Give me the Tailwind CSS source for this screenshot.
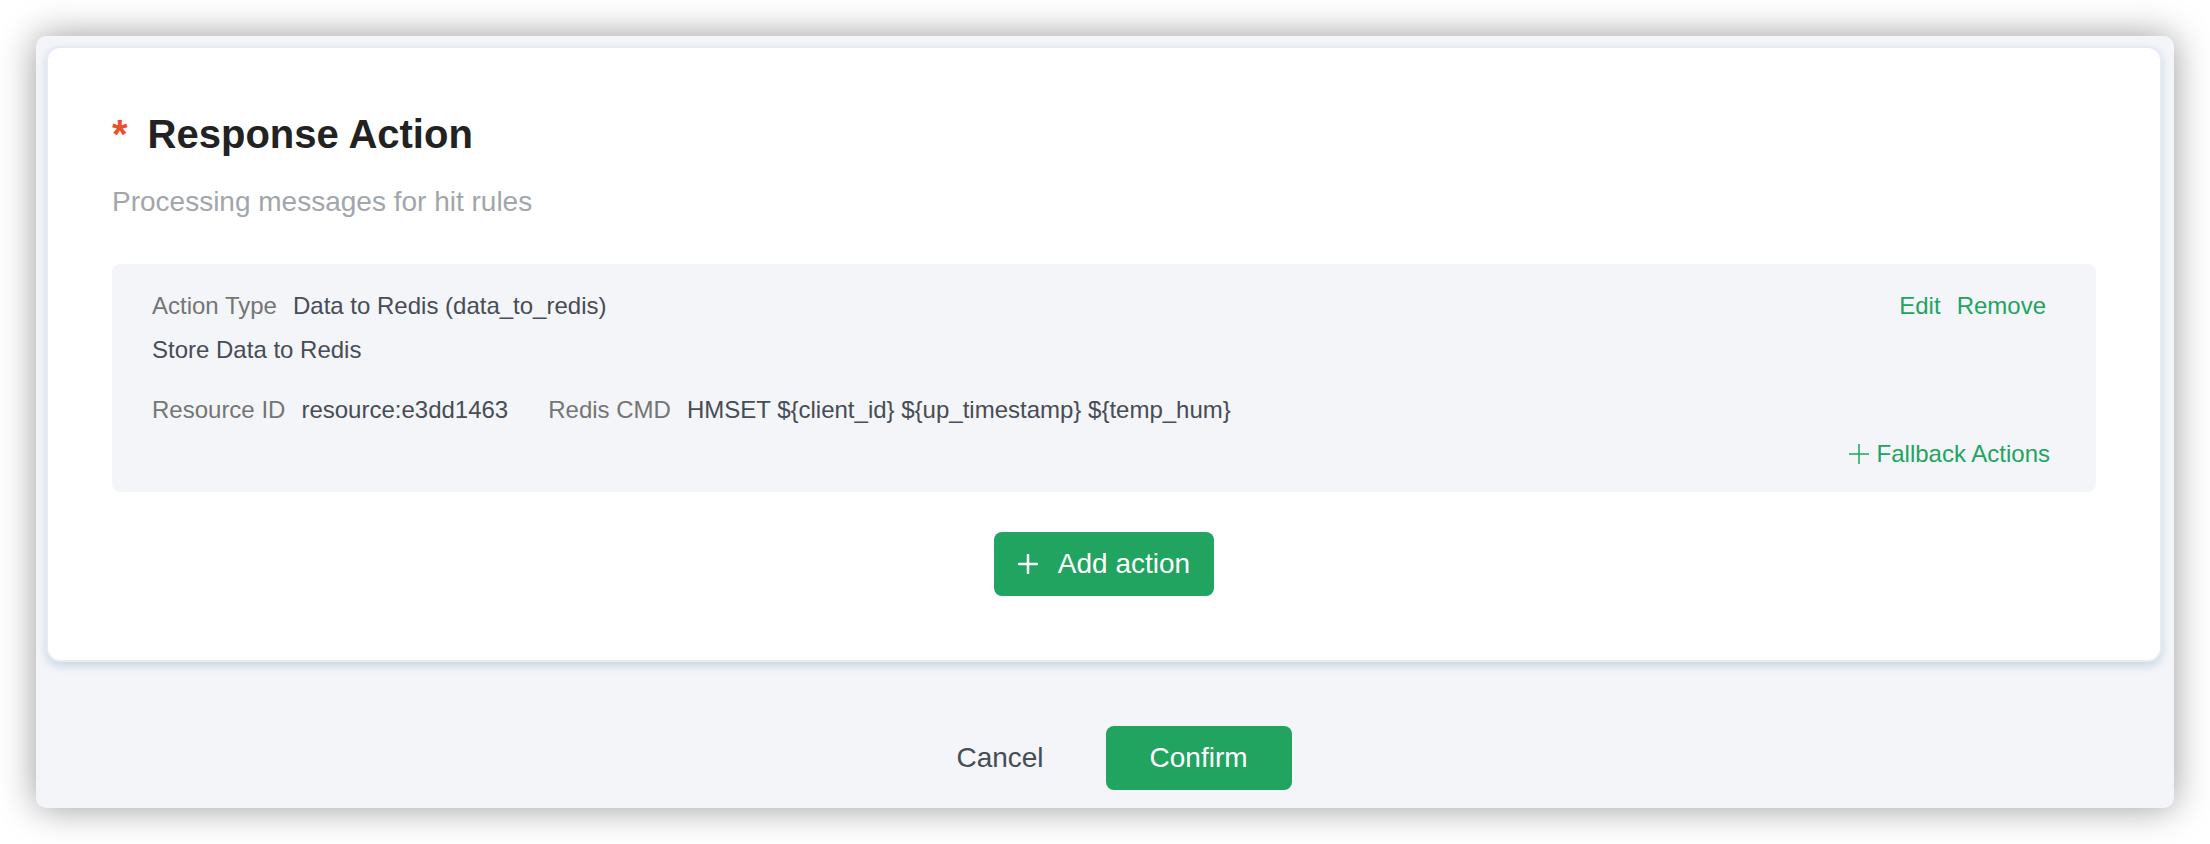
<!DOCTYPE html>
<html lang="en">
<head>
<meta charset="utf-8">
<title>Response Action</title>
<script src="https://cdn.jsdelivr.net/npm/@tailwindcss/browser@4"></script>
</head>
<body class="bg-white p-9 font-['Liberation_Sans',Arial,sans-serif] text-2xl/11 text-[#474c55]">
<main class="rounded-[10px] bg-[#f3f5f9] pt-2.5 pr-3 pb-[18px] pl-2.5 shadow-[0_0_36px_rgba(0,0,0,0.4)]">
  <section class="rounded-[14px] border-2 border-[#e5eaf4] bg-white p-16 shadow-[0_4px_8px_rgba(60,110,140,0.22)]">
    <h1 class="flex gap-5 text-[40px]/11 font-bold text-[#222222]">
      <span class="text-[#ee4f2b]">*</span>
      <span>Response Action</span>
    </h1>
    <p class="mt-6 text-[28px]/11 text-[#a2a6ac]">Processing messages for hit rules</p>

    <article class="mt-10 rounded-lg bg-[#f3f5f9] pt-5 pr-[46px] pb-4 pl-10">
      <div class="flex justify-between">
        <dl class="flex gap-4">
          <dt class="text-[#757575]">Action Type</dt>
          <dd>Data to Redis (data_to_redis)</dd>
        </dl>
        <div class="flex gap-4 pr-1 text-[#21a45f]">
          <button type="button">Edit</button>
          <button type="button">Remove</button>
        </div>
      </div>
      <p>Store Data to Redis</p>
      <dl class="mt-4 flex gap-10">
        <div class="flex gap-4">
          <dt class="text-[#757575]">Resource ID</dt>
          <dd>resource:e3dd1463</dd>
        </div>
        <div class="flex gap-4">
          <dt class="text-[#757575]">Redis CMD</dt>
          <dd>HMSET ${client_id} ${up_timestamp} ${temp_hum}</dd>
        </div>
      </dl>
      <div class="flex justify-end">
        <button type="button" class="flex items-center gap-2 text-[#21a45f]">
          <svg class="size-5" viewBox="0 0 20 20" fill="none" stroke="currentColor" stroke-width="1.5" aria-hidden="true"><path d="M10 0v20M0 10h20"/></svg>
          Fallback Actions
        </button>
      </div>
    </article>

    <div class="mt-10 flex justify-center">
      <button type="button" class="flex h-16 items-center gap-5 rounded-lg bg-[#21a45f] px-6 text-[28px]/11 text-white">
        <svg class="size-5" viewBox="0 0 20 20" fill="none" stroke="currentColor" stroke-width="2.5" stroke-linecap="round" aria-hidden="true"><path d="M10 1v18M1 10h18"/></svg>
        Add action
      </button>
    </div>
  </section>

  <footer class="mt-16 flex justify-center gap-[22px] text-[28px]/11">
    <button type="button" class="h-16 px-10">Cancel</button>
    <button type="button" class="h-16 rounded-lg bg-[#21a45f] px-11 text-white">Confirm</button>
  </footer>
</main>
</body>
</html>
